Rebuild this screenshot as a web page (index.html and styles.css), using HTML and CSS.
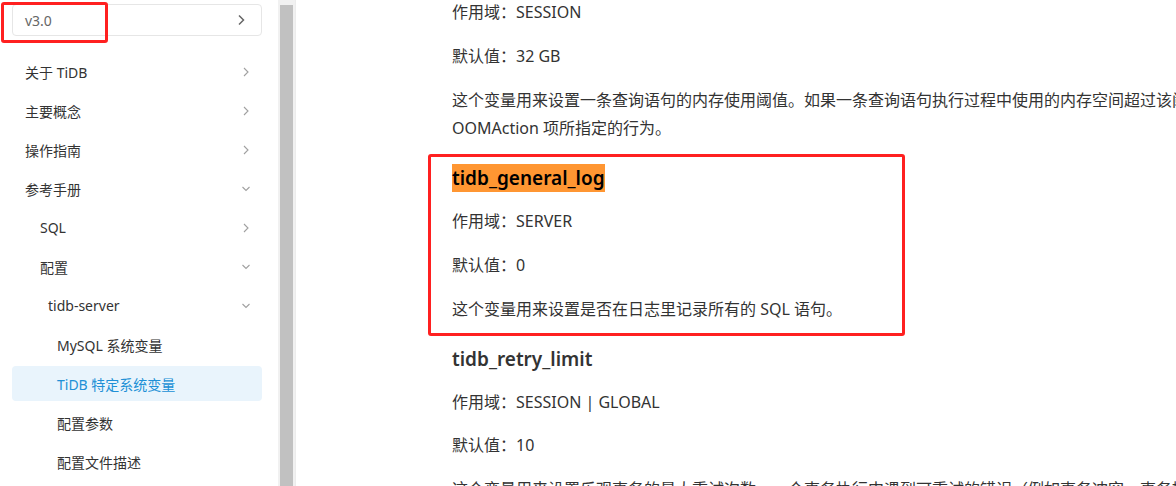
FILE: index.html
```html
<!DOCTYPE html>
<html>
<head>
    <title>TiDB 特定系统变量</title>
    <link rel="stylesheet" href="styles.css">
</head>
<body>
    <div class="layout">
        <aside class="sidebar">
            <div class="version">
                <span>v3.0</span>
                <svg class="version-arrow" width="10" height="12" viewBox="0 0 10 12"><polyline points="3,1.5 7.5,6 3,10.5" /></svg>
            </div>

            <ul class="nav">
                <li class="nav-item level-0"><span>关于 TiDB</span><svg class="arrow" width="10" height="10" viewBox="0 0 10 10"><polyline points="3,1 7,5 3,9" /></svg></li>
                <li class="nav-item level-0"><span>主要概念</span><svg class="arrow" width="10" height="10" viewBox="0 0 10 10"><polyline points="3,1 7,5 3,9" /></svg></li>
                <li class="nav-item level-0"><span>操作指南</span><svg class="arrow" width="10" height="10" viewBox="0 0 10 10"><polyline points="3,1 7,5 3,9" /></svg></li>
                <li class="nav-item level-0"><span>参考手册</span><svg class="arrow" width="10" height="10" viewBox="0 0 10 10"><polyline points="1.5,3 5,6.5 8.5,3" /></svg></li>
                <li class="nav-item level-1"><span>SQL</span><svg class="arrow" width="10" height="10" viewBox="0 0 10 10"><polyline points="3,1 7,5 3,9" /></svg></li>
                <li class="nav-item level-1"><span>配置</span><svg class="arrow" width="10" height="10" viewBox="0 0 10 10"><polyline points="1.5,3 5,6.5 8.5,3" /></svg></li>
                <li class="nav-item level-2"><span>tidb-server</span><svg class="arrow" width="10" height="10" viewBox="0 0 10 10"><polyline points="1.5,3 5,6.5 8.5,3" /></svg></li>
                <li class="nav-item level-3"><span>MySQL 系统变量</span></li>
                <li class="nav-item level-3 active"><span>TiDB 特定系统变量</span></li>
                <li class="nav-item level-3"><span>配置参数</span></li>
                <li class="nav-item level-3"><span>配置文件描述</span></li>
            </ul>
        </aside>

        <div class="scrollbar"><div class="scroll-thumb"></div></div>

        <main class="content">
            <article class="doc">
                <p>作用域：SESSION</p>
                <p>默认值：32 GB</p>
                <p>这个变量用来设置一条查询语句的内存使用阈值。如果一条查询语句执行过程中使用的内存空间超过该阈值，会触发 TiDB 启动配置文件中 OOMAction 项所指定的行为。</p>

                <h3><span class="find-hit">tidb_general_log</span></h3>
                <p>作用域：SERVER</p>
                <p>默认值：0</p>
                <p>这个变量用来设置是否在日志里记录所有的 SQL 语句。</p>

                <h3>tidb_retry_limit</h3>
                <p>作用域：SESSION | GLOBAL</p>
                <p>默认值：10</p>
                <p>这个变量用来设置乐观事务的最大重试次数。一个事务执行中遇到可重试的错误（例如事务冲突、事务提交过慢或表结构变更）时，会根据该变量的设置进行重试。</p>
            </article>
        </main>
    </div>

    <!-- red annotation frames drawn over the screenshot -->
    <div class="mark-box mark-version"></div>
    <div class="mark-box mark-section"></div>
</body>
</html>
```

FILE: styles.css
```css
body {
    margin: 0;
    font-family: "Noto Sans", "Noto Sans CJK SC", sans-serif;
    color: #333;
    background: #fff;
    overflow: hidden;
    height: 486px;
    position: relative;
}
.layout {
    display: flex;
    height: 486px;
}
.sidebar {
    width: 250px;
    flex-shrink: 0;
    padding: 4px 16px 0 12px;
}
.version {
    height: 30px;
    border: 1px solid #e6e6e6;
    border-radius: 4px;
    display: flex;
    align-items: center;
    justify-content: space-between;
    padding: 0 15px 0 12px;
    font-size: 14px;
    color: #666;
}
.version-arrow {
    fill: none;
    stroke: #666;
    stroke-width: 1.5;
}
.nav {
    list-style: none;
    margin: 18px 0 0;
    padding: 0;
}
.nav-item {
    height: 35px;
    margin-bottom: 4px;
    display: flex;
    align-items: center;
    justify-content: space-between;
    padding-right: 11px;
    font-size: 14px;
    color: #333;
    border-radius: 4px;
}
.level-0 { padding-left: 13px; }
.level-1 { padding-left: 28px; }
.level-2 { padding-left: 36px; }
.level-3 { padding-left: 45px; }
.nav-item.active {
    background: #e9f4fc;
    color: #2090d6;
}
.arrow {
    fill: none;
    stroke: #a0a0a0;
    stroke-width: 1.1;
}
.scrollbar {
    width: 17px;
    flex-shrink: 0;
    background: #f1f1f1;
    display: flex;
    flex-direction: column;
    border-right: 1px solid #ececec;
}
.scroll-thumb {
    flex: 1;
    margin: 5px 2px 0;
    background: #c1c1c1;
}
.content {
    flex: 1;
    padding-left: 156px;
    min-width: 0;
}
.doc {
    width: 1000px;
    margin-top: -2px;
    font-size: 16px;
}
.doc p {
    margin: 0 0 15px;
    line-height: 28.8px;
}
.doc h3 {
    margin: 19px 0 13px;
    font-size: 19px;
    line-height: 32px;
    font-weight: 600;
    color: #333;
}
.find-hit {
    background: #ff9632;
    color: #000;
    padding: 1px 0;
}
.mark-box {
    position: absolute;
    border: 3px solid #ff2020;
    border-radius: 3px;
}
.mark-version {
    left: 1px;
    top: 2px;
    width: 101px;
    height: 35px;
}
.mark-section {
    left: 428px;
    top: 154px;
    width: 471px;
    height: 176px;
}
```
